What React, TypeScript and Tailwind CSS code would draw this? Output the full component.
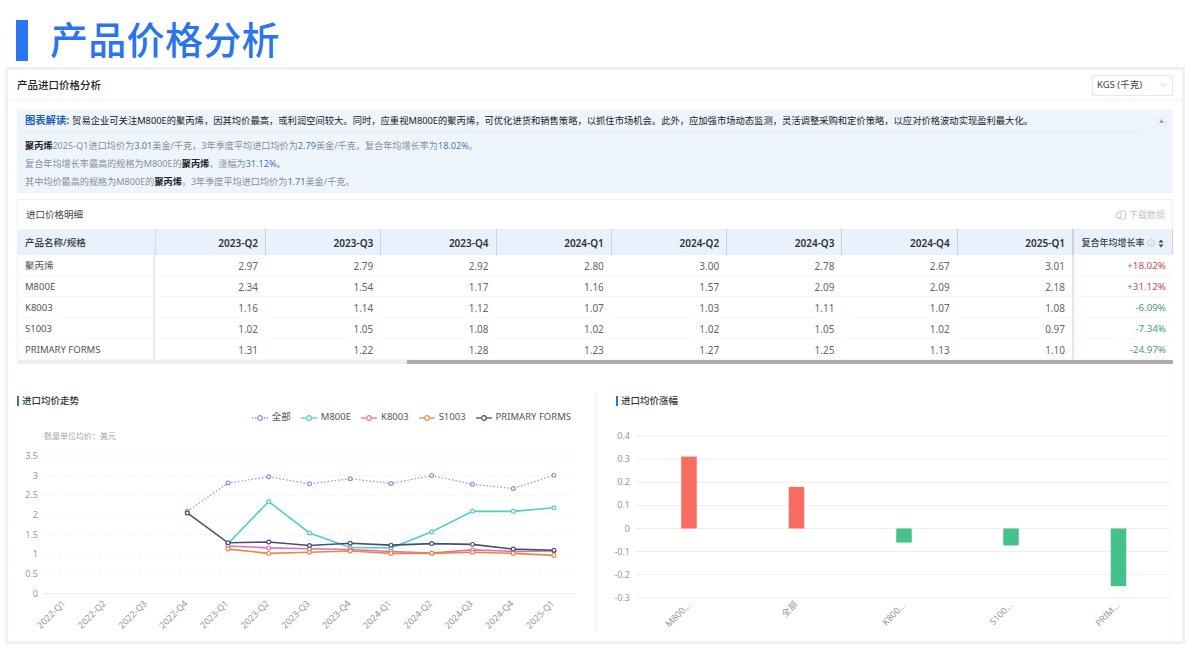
import React from 'react';
import { ChevronDown } from 'lucide-react';

const quarters = ['2023-Q2', '2023-Q3', '2023-Q4', '2024-Q1', '2024-Q2', '2024-Q3', '2024-Q4', '2025-Q1'];

const rows = [
  { name: '聚丙烯', values: ['2.97', '2.79', '2.92', '2.80', '3.00', '2.78', '2.67', '3.01'], rate: '+18.02%' },
  { name: 'M800E', values: ['2.34', '1.54', '1.17', '1.16', '1.57', '2.09', '2.09', '2.18'], rate: '+31.12%' },
  { name: 'K8003', values: ['1.16', '1.14', '1.12', '1.07', '1.03', '1.11', '1.07', '1.08'], rate: '-6.09%' },
  { name: 'S1003', values: ['1.02', '1.05', '1.08', '1.02', '1.02', '1.05', '1.02', '0.97'], rate: '-7.34%' },
  { name: 'PRIMARY FORMS', values: ['1.31', '1.22', '1.28', '1.23', '1.27', '1.25', '1.13', '1.10'], rate: '-24.97%' },
];

const axisQuarters = [
  '2022-Q1', '2022-Q2', '2022-Q3', '2022-Q4', '2023-Q1', '2023-Q2', '2023-Q3',
  '2023-Q4', '2024-Q1', '2024-Q2', '2024-Q3', '2024-Q4', '2025-Q1',
];

// start = index into axisQuarters of the first point
const series = [
  { name: '全部', color: '#7b9bdc', dotted: true, start: 3, data: [2.09, 2.81, 2.97, 2.79, 2.92, 2.8, 3.0, 2.78, 2.67, 3.01] },
  { name: 'M800E', color: '#4fd0c6', start: 4, data: [1.27, 2.34, 1.54, 1.17, 1.16, 1.57, 2.09, 2.09, 2.18] },
  { name: 'K8003', color: '#dc6fbd', start: 4, data: [1.21, 1.16, 1.14, 1.12, 1.07, 1.03, 1.11, 1.07, 1.08] },
  { name: 'S1003', color: '#e58a3c', start: 4, data: [1.13, 1.02, 1.05, 1.08, 1.02, 1.02, 1.05, 1.02, 0.97] },
  { name: 'PRIMARY FORMS', color: '#44506f', start: 3, data: [2.05, 1.29, 1.31, 1.22, 1.28, 1.23, 1.27, 1.25, 1.13, 1.1] },
];

const lineX = (i: number) => 65 + i * 40.75;
const lineY = (v: number) => 593.5 - v * 39.3;

const bars = [
  { label: 'M800...', x: 690, v: 0.3112, lx: 692, ly: 606 },
  { label: '全部', x: 797.5, v: 0.1802, lx: 799, ly: 605 },
  { label: 'K800...', x: 905, v: -0.0609, lx: 907, ly: 606 },
  { label: 'S100...', x: 1012, v: -0.0734, lx: 1014, ly: 606 },
  { label: 'PRIM...', x: 1119.5, v: -0.2497, lx: 1121, ly: 606 },
];

const barY = (v: number) => 528.5 - v * 231;

function Blue({ children }: { children: React.ReactNode }) {
  return <span className="text-[#3f78c4]">{children}</span>;
}

function Strong({ children }: { children: React.ReactNode }) {
  return <span className="font-semibold text-[#1f2329]">{children}</span>;
}

function SectionTitle({ children }: { children: React.ReactNode }) {
  return (
    <div className="flex items-center gap-[3px] h-[10px] text-[9.5px] font-medium text-[#333]">
      <span className="w-[2px] h-[10px] bg-[#2a75c9]" />
      <span>{children}</span>
    </div>
  );
}

function LegendItem({ name, color, dotted }: { name: string; color: string; dotted?: boolean }) {
  return (
    <div className="flex items-center gap-[4px]">
      <svg width="16" height="8" viewBox="0 0 16 8">
        <line x1="0" y1="4" x2="16" y2="4" stroke={color} strokeWidth="1.3" strokeDasharray={dotted ? '1.5 1.5' : undefined} />
        <circle cx="8" cy="4" r="2.3" fill="#fff" stroke={color} strokeWidth="1.2" />
      </svg>
      <span>{name}</span>
    </div>
  );
}

function LineChart() {
  return (
    <svg className="block" width="588" height="207" viewBox="8 425 588 207">
      {[0, 0.5, 1, 1.5, 2, 2.5, 3, 3.5].map((v) => (
        <g key={v}>
          <line x1="44" x2="575" y1={lineY(v)} y2={lineY(v)} stroke={v === 0 ? '#eeeeee' : '#ececec'} strokeDasharray={v === 0 ? undefined : '2 3'} />
          <text x="38" y={lineY(v) + 3} textAnchor="end" fontSize="9" fill="#999">{v}</text>
        </g>
      ))}
      {axisQuarters.map((q, i) => (
        <text key={q} x={lineX(i) + 1} y="604" textAnchor="end" fontSize="9" fill="#999" transform={`rotate(-45 ${lineX(i) + 1} 604)`}>{q}</text>
      ))}
      {series.map((s) => (
        <g key={s.name}>
          <polyline
            fill="none"
            stroke={s.color}
            strokeWidth={s.dotted ? 1.2 : 1.6}
            strokeDasharray={s.dotted ? '1.5 2' : undefined}
            points={s.data.map((v, i) => `${lineX(s.start + i)},${lineY(v)}`).join(' ')}
          />
          {s.data.map((v, i) => (
            <circle key={i} cx={lineX(s.start + i)} cy={lineY(v)} r="1.9" fill="#fff" stroke={s.color} strokeWidth="1.2" />
          ))}
        </g>
      ))}
    </svg>
  );
}

function BarChart() {
  return (
    <svg className="block" width="585" height="207" viewBox="597 425 585 207">
      {[0.4, 0.3, 0.2, 0.1, 0, -0.1, -0.2, -0.3].map((v) => (
        <g key={v}>
          <line x1="637" x2="1172" y1={barY(v)} y2={barY(v)} stroke="#eeeeee" />
          <text x="631" y={barY(v) + 3} textAnchor="end" fontSize="9" fill="#999">{v}</text>
        </g>
      ))}
      {bars.map((b) => (
        <g key={b.label}>
          <rect
            x={b.x - 7.75}
            width="15.5"
            y={b.v > 0 ? barY(b.v) : barY(0)}
            height={Math.abs(b.v) * 231}
            fill={b.v > 0 ? '#f96c60' : '#47c18b'}
          />
          <text x={b.lx} y={b.ly} textAnchor="end" fontSize="9" fill="#999" transform={`rotate(-45 ${b.lx} ${b.ly})`}>{b.label}</text>
        </g>
      ))}
    </svg>
  );
}

export default function App() {
  return (
    <div className="w-[1190px] h-[645px] overflow-hidden bg-white font-['Noto_Sans','Noto_Sans_CJK_SC',sans-serif]">
      <div className="flex h-[67px] pl-[16px] pt-[20px] gap-[22px]">
        <div className="w-[12px] h-[41px] bg-[#2a75f0]" />
        <div className="h-[41px] leading-[39px] text-[38px] font-medium tracking-[0.3px] text-[#2a75ee]">产品价格分析</div>
      </div>

      <div className="ml-[5px] w-[1180px] h-[577px] border-[3px] border-[#eef1f8]">
        <div className="flex items-center justify-between h-[31px] px-[9px] border-b border-[#f3f4f7]">
          <span className="pt-[1px] text-[10.5px] font-medium text-[#222]">产品进口价格分析</span>
          <div className="flex items-center justify-between w-[81px] h-[21px] pl-[4px] pr-[4px] border border-[#e8eaef] text-[9.5px] text-[#444]">
            <span>KGS (千克)</span>
            <ChevronDown className="w-[10px] h-[10px] text-[#c4c7cf]" />
          </div>
        </div>

        <div className="relative mx-[9px] mt-[8px] h-[84px] bg-[#eff5fd] px-[8px] text-[9.15px]">
          <div className="flex items-center h-[23px] pt-[1px] text-[#222] text-[9.3px] border-b border-dotted border-[#d5dff0] w-[1115px]">
            <span className="font-bold text-[10.3px] text-[#1f5fb8] mr-[3px]">图表解读:</span>
            <span>贸易企业可关注M800E的聚丙烯，因其均价最高，或利润空间较大。同时，应重视M800E的聚丙烯，可优化进货和销售策略，以抓住市场机会。此外，应加强市场动态监测，灵活调整采购和定价策略，以应对价格波动实现盈利最大化。</span>
          </div>
          <div className="absolute right-[7px] top-[8px] flex items-center justify-center w-[9px] h-[9px] bg-[#f8fafe] border border-[#e3e9f3] text-[5px] text-[#9aa3b2]">▲</div>
          <div className="pt-[5px] text-[#8a8f99] leading-[18px]">
            <div><Strong>聚丙烯</Strong>2025-Q1进口均价为<Blue>3.01</Blue>美金/千克，3年季度平均进口均价为<Blue>2.79</Blue>美金/千克，复合年均增长率为<Blue>18.02%</Blue>。</div>
            <div>复合年均增长率最高的规格为M800E的<Strong>聚丙烯</Strong>，涨幅为<Blue>31.12%</Blue>。</div>
            <div>其中均价最高的规格为M800E的<Strong>聚丙烯</Strong>，3年季度平均进口均价为<Blue>1.71</Blue>美金/千克。</div>
          </div>
        </div>

        <div className="mx-[9px] mt-[6px] h-[165px] border-t border-l border-[#f0f1f4]">
          <div className="flex items-center justify-between h-[29px] pt-[1px] pl-[8px] pr-[7px] border-r border-[#f0f1f4]">
            <span className="text-[9.5px] text-[#444]">进口价格明细</span>
            <div className="flex items-center gap-[3px] text-[9px] text-[#c3c6cc]">
              <svg width="10" height="10" viewBox="0 0 10 10" fill="none" stroke="#c3c6cc" strokeWidth="0.9">
                <rect x="2.5" y="1" width="7" height="8" rx="1" />
                <rect x="0.5" y="3" width="4.5" height="4.5" fill="#fff" />
              </svg>
              <span>下载数据</span>
            </div>
          </div>

          <div className="grid grid-cols-[137px_110px_repeat(7,1fr)_101px]">
            <div className="flex items-center h-[26px] pt-[2px] pl-[7px] bg-[#e9f1fd] text-[9.5px] font-medium text-[#333]">产品名称/规格</div>
            {quarters.map((q, i) => (
              <div
                key={q}
                className={`flex items-center justify-end h-[26px] pt-[2px] pr-[7px] bg-[#e9f1fd] text-[10px] font-semibold text-[#2c3038] border-l ${i === 0 ? 'border-[#d3d9e4]' : 'border-[#c9d1de]'}`}
              >
                {q}
              </div>
            ))}
            <div className="flex items-center justify-center gap-[3px] h-[26px] pt-[2px] bg-[#e9f1fd] text-[9px] font-medium text-[#3a3f48] border-l-[2px] border-r border-[#cdd4e0]">
              <span>复合年均增长率</span>
              <svg width="8" height="8" viewBox="0 0 8 8" fill="none" stroke="#b5bac4" strokeWidth="0.7">
                <circle cx="4" cy="4" r="3.4" />
                <line x1="4" y1="3.4" x2="4" y2="6" />
              </svg>
              <svg width="6" height="9" viewBox="0 0 6 9" fill="#444">
                <path d="M3 0.5 L5.5 3.5 H0.5 Z" />
                <path d="M3 8.5 L5.5 5.5 H0.5 Z" />
              </svg>
            </div>

            {rows.map((row) => (
              <React.Fragment key={row.name}>
                <div className="flex items-center h-[21px] pt-[2px] pl-[7px] border-b border-r-[2px] border-b-[#f6f6f6] border-r-[#e9ebf0] text-[9.5px] text-[#555]">{row.name}</div>
                {row.values.map((v, i) => (
                  <div key={i} className="flex items-center justify-end h-[21px] pt-[2px] pr-[7px] border-b border-[#f6f6f6] text-[10px] text-[#666]">{v}</div>
                ))}
                <div className={`flex items-center justify-end h-[21px] pt-[2px] pr-[7px] border-b border-b-[#f6f6f6] border-l-[2px] border-l-[#e3e6ec] text-[9.8px] ${row.rate.startsWith('+') ? 'text-[#c0504d]' : 'text-[#3fa26e]'}`}>{row.rate}</div>
              </React.Fragment>
            ))}
          </div>

          <div className="flex h-[4px]">
            <div className="w-[389px] bg-[#eceef1]" />
            <div className="flex-1 bg-[#a8abb0]" />
          </div>
        </div>

        <div className="flex mt-[28px]">
          <div className="w-[588px] h-[240px] border-r border-[#eef0f3]">
            <div className="pl-[9px] pt-[4px] h-[18px]">
              <SectionTitle>进口均价走势</SectionTitle>
            </div>
            <div className="flex items-center justify-end gap-[10px] h-[15px] pr-[24px] text-[9.5px] text-[#555]">
              {series.map((s) => (
                <LegendItem key={s.name} name={s.name} color={s.color} dotted={s.dotted} />
              ))}
            </div>
            <div className="relative">
              <span className="absolute left-[36px] top-[5px] text-[8px] text-[#aaa]">数量单位均价：美元</span>
              <LineChart />
            </div>
          </div>
          <div className="flex-1">
            <div className="pl-[20px] pt-[4px] h-[33px]">
              <SectionTitle>进口均价涨幅</SectionTitle>
            </div>
            <BarChart />
          </div>
        </div>
      </div>
    </div>
  );
}
